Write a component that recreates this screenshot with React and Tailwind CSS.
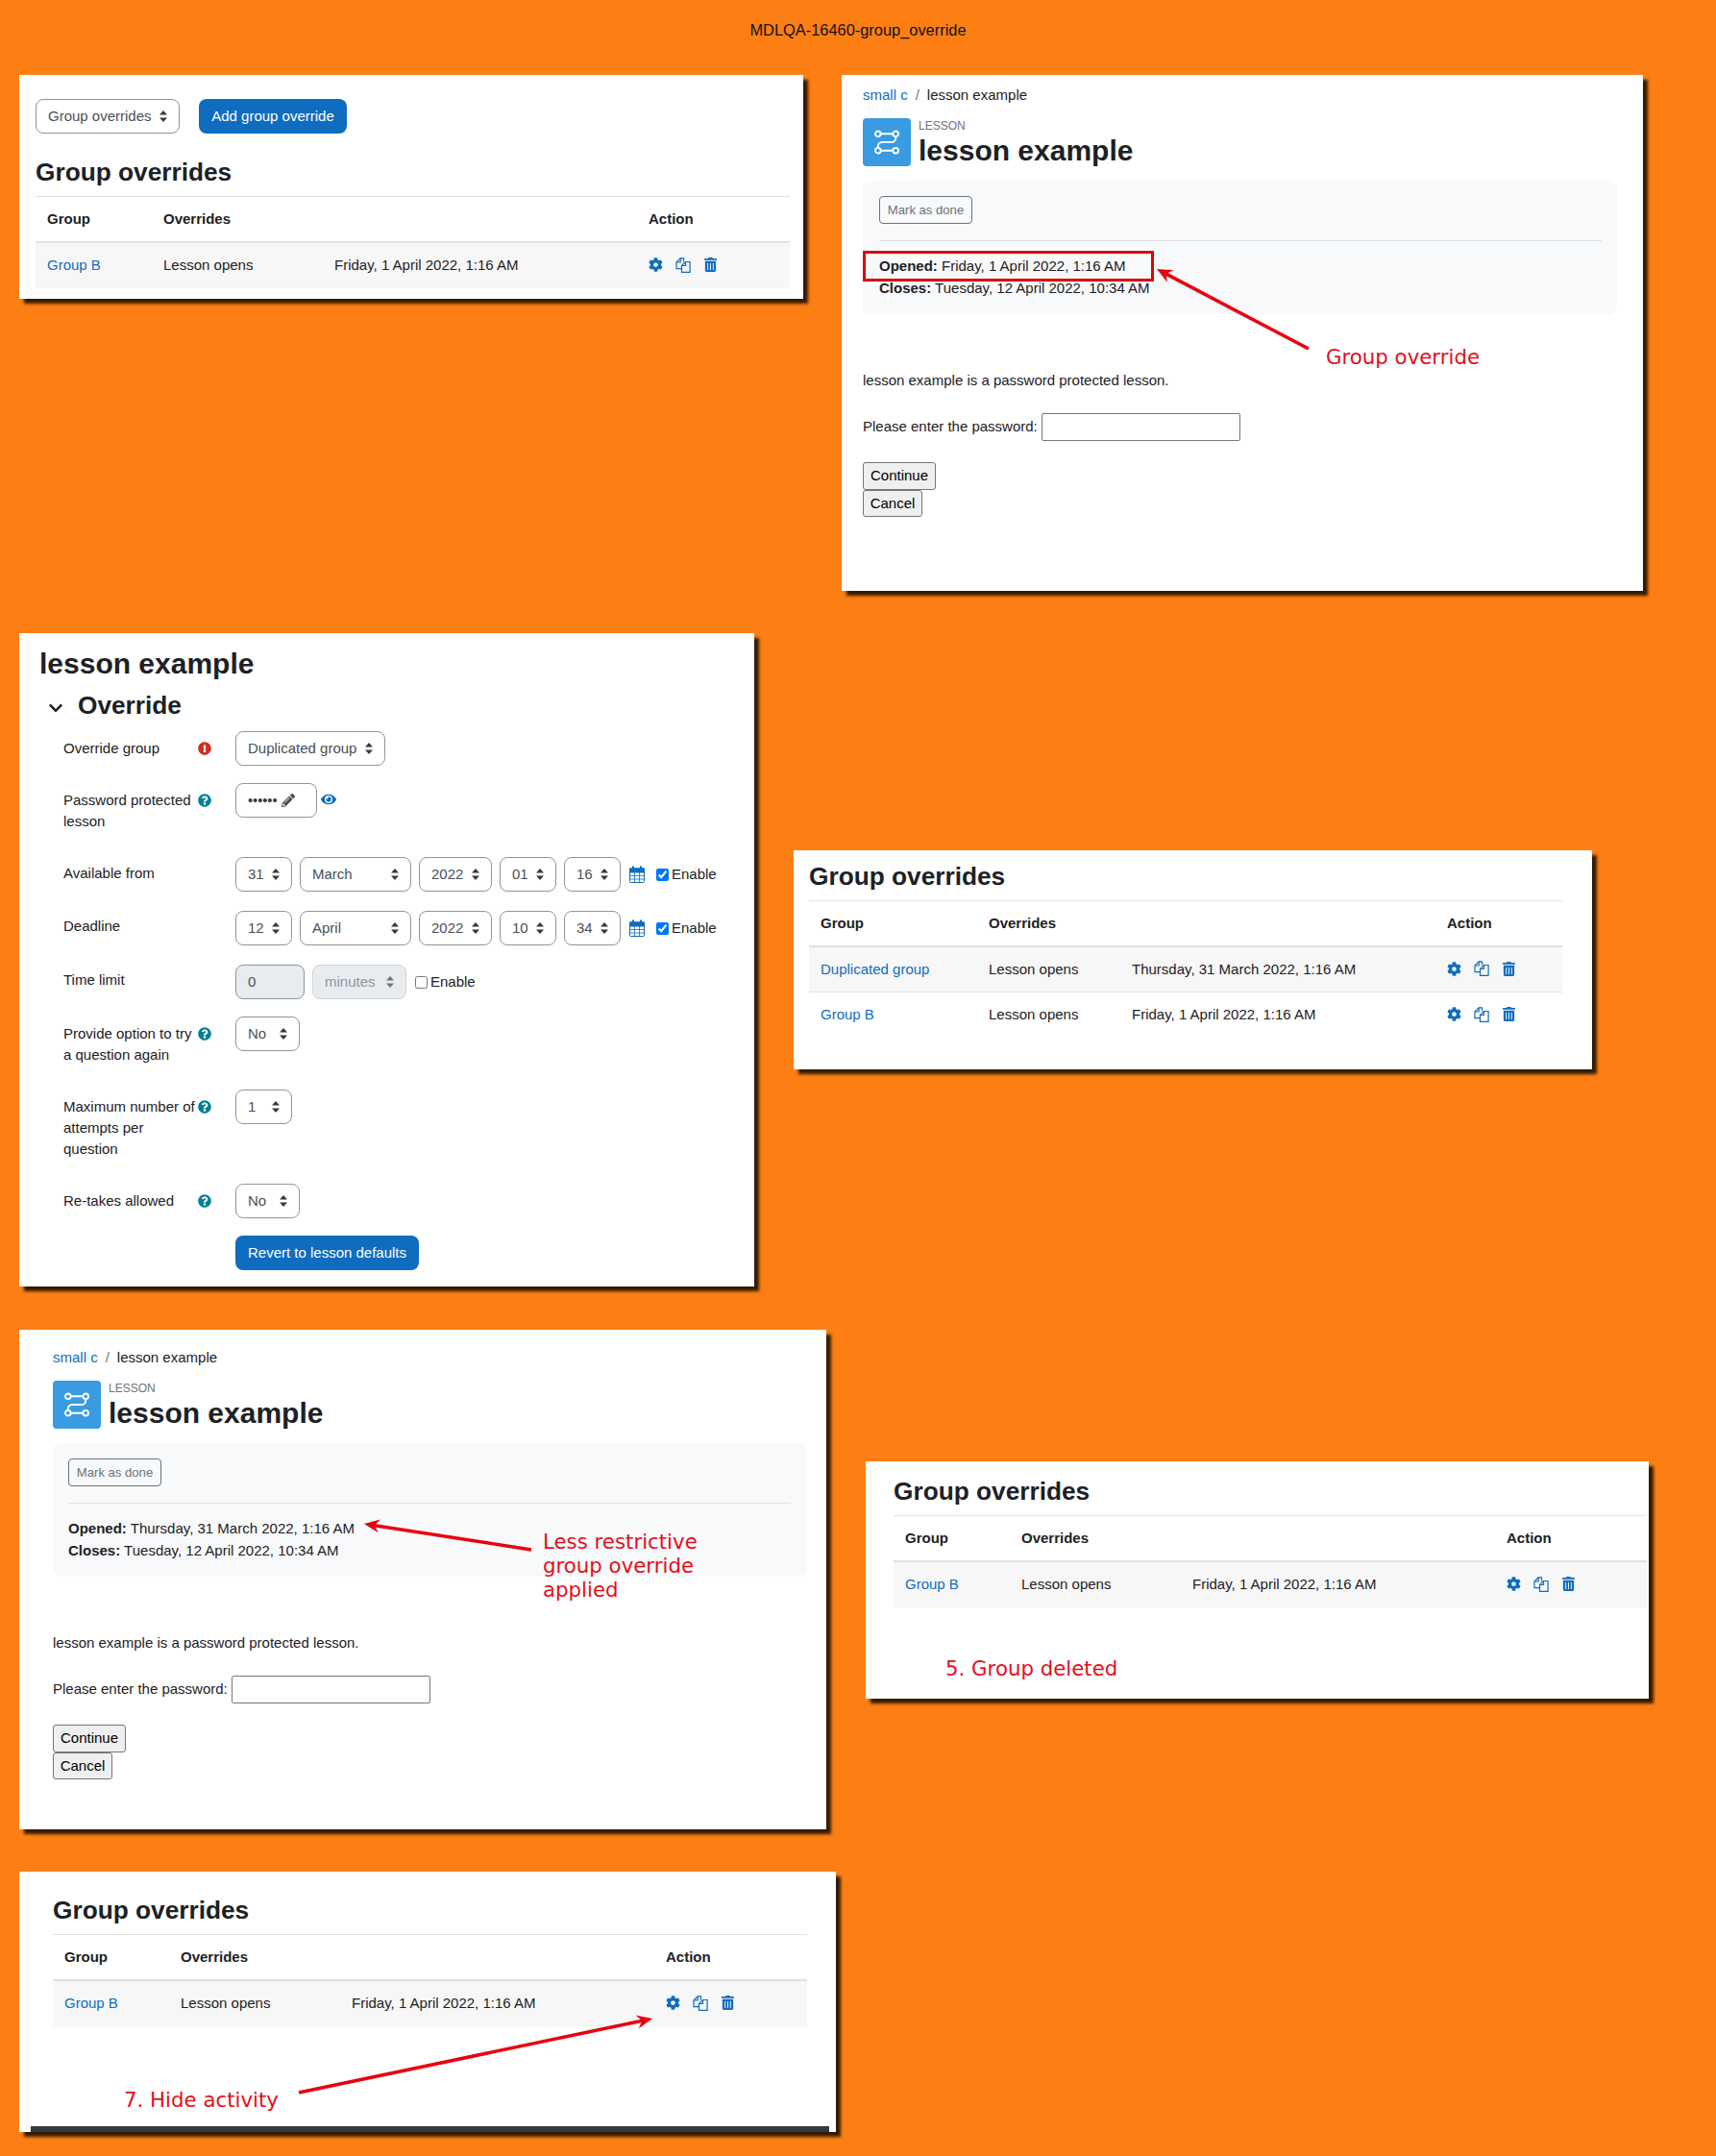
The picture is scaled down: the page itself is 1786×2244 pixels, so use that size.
import React from "react";
import { FaCog, FaTrashAlt, FaChevronDown, FaExclamationCircle, FaQuestionCircle, FaEye, FaPencilAlt } from "react-icons/fa";

const panel = "relative shrink-0 bg-white shadow-[5px_5px_3px_rgba(30,15,0,0.9)]";
const h2 = "h-[32px] text-[26.25px] leading-[32px] font-bold text-[#1d2125]";
const annot = "absolute font-['DejaVu_Sans',sans-serif] text-[21.3px] leading-[25px] text-[#e3101c] whitespace-nowrap";

function Arrow({ x1, y1, x2, y2 }) {
  const a = Math.atan2(y2 - y1, x2 - x1);
  const L = 16, W = 7;
  const bx = x2 - L * Math.cos(a), by = y2 - L * Math.sin(a);
  const nx = -Math.sin(a), ny = Math.cos(a);
  const ix = x2 - 11 * Math.cos(a), iy = y2 - 11 * Math.sin(a);
  const pts = `${x2},${y2} ${bx + nx * W},${by + ny * W} ${ix},${iy} ${bx - nx * W},${by - ny * W}`;
  return (
    <svg className="absolute inset-0 w-full h-full pointer-events-none">
      <line x1={x1} y1={y1} x2={ix} y2={iy} stroke="#e8000f" strokeWidth="3.5" />
      <polygon points={pts} fill="#e8000f" />
    </svg>
  );
}

function CopyIcon() {
  return (
    <svg width="16" height="16" viewBox="0 0 16 16" fill="none" stroke="#0f6cbf" strokeWidth="1.2">
      <path d="M8.5 4.5V.8H5.2L1 5v6.7h5.5" />
      <path d="M5.2.8V5H1" />
      <path d="M10.5 4.5h4.6v10.8H6.5V8.5z" />
      <path d="M10.5 4.5v4h-4" />
    </svg>
  );
}

function CalendarIcon() {
  return (
    <svg width="16" height="18" viewBox="0 0 16 18" fill="none" stroke="#0f6cbf" strokeWidth="1" className="ml-[9px] shrink-0">
      <rect x="0.5" y="3" width="15" height="14.5" rx="1" />
      <rect x="0.5" y="3" width="15" height="4" fill="#0f6cbf" />
      <path d="M4 .5v4.5M12 .5v4.5" strokeWidth="2" />
      <path d="M5.5 7v10.5M10.5 7v10.5M.5 10.5h15M.5 14h15" strokeWidth="0.8" />
    </svg>
  );
}

function Actions() {
  return (
    <div className="flex items-center text-[#0f6cbf] mb-[2px]">
      <span className="w-[28px] flex"><FaCog size={15} /></span>
      <span className="w-[28px] flex"><CopyIcon /></span>
      <span className="w-[28px] flex pl-[1px]"><FaTrashAlt size={15} /></span>
    </div>
  );
}

function OverridesTable({ width, cols, rows }) {
  return (
    <table className={`${width} table-fixed border-separate border-spacing-0 border-t border-[#dee2e6] text-[15px] text-[#1d2125]`}>
      <colgroup>
        {cols.map((c, i) => <col key={i} className={c} />)}
      </colgroup>
      <thead>
        <tr>
          <th className="h-[48px] pl-3 text-left font-bold border-b-2 border-[#dee2e6]">Group</th>
          <th className="pl-3 text-left font-bold border-b-2 border-[#dee2e6]">Overrides</th>
          <th className="border-b-2 border-[#dee2e6]"></th>
          <th className="pl-3 text-left font-bold border-b-2 border-[#dee2e6]">Action</th>
        </tr>
      </thead>
      <tbody>
        {rows.map((r, i) => (
          <tr key={r.g} className={i === 0 ? "bg-[#f7f7f7]" : ""}>
            <td className={`h-[47px] pl-3 text-[#0f6cbf] ${i === 0 && rows.length > 1 ? "border-b border-[#dee2e6]" : ""}`}>{r.g}</td>
            <td className={`pl-3 ${i === 0 && rows.length > 1 ? "border-b border-[#dee2e6]" : ""}`}>Lesson opens</td>
            <td className={`pl-3 whitespace-nowrap ${i === 0 && rows.length > 1 ? "border-b border-[#dee2e6]" : ""}`}>{r.d}</td>
            <td className={`pl-3 ${i === 0 && rows.length > 1 ? "border-b border-[#dee2e6]" : ""}`}><Actions /></td>
          </tr>
        ))}
      </tbody>
    </table>
  );
}

function LessonIcon() {
  return (
    <div className="w-[50px] h-[50px] rounded-[4px] bg-[#399be2] flex items-center justify-center shrink-0">
      <svg width="26" height="26" viewBox="0 0 24 24" fill="none" stroke="#fff" strokeWidth="1.8">
        <circle cx="3.5" cy="4" r="2.6" />
        <circle cx="20.5" cy="4" r="2.6" />
        <circle cx="3.5" cy="20" r="2.6" />
        <circle cx="20.5" cy="20" r="2.6" />
        <path d="M6 4h12M6 20h12M20.5 6.6v1.4a4 4 0 0 1-4 4h-9a4 4 0 0 0-4 4v1.4" />
      </svg>
    </div>
  );
}

function LessonView({ opened, closes, topPad, boxPad }) {
  return (
    <div className={topPad}>
      <div className="h-[20px] leading-[20px] text-[15px] text-[#1d2125]">
        <span className="text-[#0f6cbf]">small c</span>
        <span className="mx-[8px] text-[#6a737b]">/</span>
        <span>lesson example</span>
      </div>
      <div className="mt-[14px] flex gap-[8px]">
        <LessonIcon />
        <div>
          <div className="h-[16px] leading-[16px] text-[12px] text-[#6a737b]">LESSON</div>
          <div className="mt-[2px] h-[32px] leading-[32px] text-[30px] font-bold text-[#1d2125]">lesson example</div>
        </div>
      </div>
      <div className={`mt-[15px] w-[785px] h-[139px] rounded-[8px] bg-[#f8f9fa] pt-[16px] ${boxPad}`}>
        <button className="block w-[97px] h-[29px] rounded-[4px] border border-[#6a737b] bg-transparent text-[13.1px] text-[#6a737b]">Mark as done</button>
        <div className="mt-[17px] border-t border-[#dee2e6] w-[752px]"></div>
        <div className="mt-[14px] text-[15px] leading-[23px] text-[#1d2125]">
          <div><b>Opened:</b> {opened}</div>
          <div><b>Closes:</b> {closes}</div>
        </div>
      </div>
      <p className="mt-[58px] h-[22px] leading-[22px] text-[15px] text-[#1d2125]">lesson example is a password protected lesson.</p>
      <div className="mt-[23px] flex items-center h-[29px] text-[15px] text-[#1d2125]">
        <span>Please enter the password:</span>
        <input type="password" className="ml-[4px] w-[207px] h-[29px] border border-[#767676] rounded-[2px] bg-white" />
      </div>
      <div className="mt-[22px] flex flex-col items-start">
        <button className="h-[29px] w-[76px] border border-[#767676] rounded-[3px] bg-[#efefef] text-[15px] text-black">Continue</button>
        <button className="h-[28px] w-[62px] border border-[#767676] rounded-[3px] bg-[#efefef] text-[15px] text-black">Cancel</button>
      </div>
    </div>
  );
}

function UpDown({ color = "#343a40" }) {
  return (
    <svg width="8" height="12" viewBox="0 0 8 12" className="shrink-0">
      <path d="M4 0 L8 4.6 H0 Z M4 12 L0 7.4 H8 Z" fill={color} />
    </svg>
  );
}

function Sel({ w, children, disabled }) {
  return (
    <div className={`${w} h-[36px] shrink-0 flex items-center justify-between pl-[12px] pr-[12px] rounded-[8px] border text-[15px] ${disabled ? "bg-[#e9ecef] border-[#ced4da] text-[#8f959e]" : "bg-white border-[#8f959e] text-[#495057]"}`}>
      <span className="whitespace-nowrap">{children}</span>
      <UpDown color={disabled ? "#6a737b" : "#343a40"} />
    </div>
  );
}

function Help() {
  return <FaQuestionCircle size={14} className="text-[#008196] shrink-0" />;
}

function Row({ h, pt, label, icon, children }) {
  return (
    <div className={`${h} flex items-start`}>
      <div className={`w-[179px] shrink-0 flex text-[15px] leading-[22px] text-[#1d2125] ${pt}`}>
        <div className="w-[140px] shrink-0">{label}</div>
        <div className="h-[22px] flex items-center">{icon}</div>
      </div>
      {children}
    </div>
  );
}

function DateRow({ d, m, y, hh, mm }) {
  return (
    <div className="flex items-center">
      <Sel w="w-[59px]">{d}</Sel>
      <div className="ml-[8px]"><Sel w="w-[116px]">{m}</Sel></div>
      <div className="ml-[8px]"><Sel w="w-[76px]">{y}</Sel></div>
      <div className="ml-[8px]"><Sel w="w-[59px]">{hh}</Sel></div>
      <div className="ml-[8px]"><Sel w="w-[59px]">{mm}</Sel></div>
      <CalendarIcon />
      <input type="checkbox" defaultChecked className="ml-[12px] w-[13px] h-[13px] shrink-0" />
      <span className="ml-[3px] text-[15px] text-[#1d2125]">Enable</span>
    </div>
  );
}

export default function App() {
  return (
    <div className="w-[1786px] h-[2244px] overflow-hidden bg-[#fd7f14] font-['Liberation_Sans',Arial,sans-serif]">
      <div className="h-[78px] pt-[22px] text-center text-[16.4px] leading-[18px] text-[#111]">MDLQA-16460-group_override</div>

      <div className="flex items-start pl-[20px]">
        <div className={`${panel} w-[816px] h-[233px] pl-[17px] pt-[25px]`}>
          <div className="flex items-center">
            <Sel w="w-[150px]">Group overrides</Sel>
            <button className="ml-[20px] w-[154px] h-[36px] rounded-[8px] bg-[#0f6cbf] text-white text-[15px]">Add group override</button>
          </div>
          <h2 className={`${h2} mt-[24px] mb-[9px]`}>Group overrides</h2>
          <OverridesTable width="w-[785px]" cols={["w-[121px]", "w-[178px]", "w-[327px]", "w-[159px]"]} rows={[{ g: "Group B", d: "Friday, 1 April 2022, 1:16 AM" }]} />
        </div>

        <div className={`${panel} ml-[40px] w-[834px] h-[537px] pl-[22px]`}>
          <LessonView topPad="pt-[11px]" boxPad="px-[17px]" opened="Friday, 1 April 2022, 1:16 AM" closes="Tuesday, 12 April 2022, 10:34 AM" />
          <div className="absolute left-[22px] top-[183px] w-[303px] h-[32px] border-[3px] border-[#e0000f]"></div>
          <Arrow x1={486} y1={285} x2={328} y2={202} />
          <div className={`${annot} left-[504px] top-[281px]`}>Group override</div>
        </div>
      </div>

      <div className="flex items-start pl-[20px] mt-[44px]">
        <div className={`${panel} w-[765px] h-[680px] pt-[14px]`}>
          <div className="pl-[21px] h-[36px] leading-[36px] text-[30px] font-bold text-[#1d2125]">lesson example</div>
          <div className="mt-[11px] pl-[30px] h-[30px] flex items-center">
            <FaChevronDown size={16} className="text-[#1d2125] mr-[15px] mt-[3px]" />
            <span className="text-[26.25px] font-bold text-[#1d2125]">Override</span>
          </div>
          <div className="mt-[11px] pl-[46px]">
            <Row h="h-[54px]" pt="pt-[7px]" label="Override group" icon={<FaExclamationCircle size={14} className="text-[#ca3120]" />}>
              <Sel w="w-[156px]">Duplicated group</Sel>
            </Row>
            <Row h="h-[77px]" pt="pt-[7px]" label={<>Password protected<br />lesson</>} icon={<Help />}>
              <div className="w-[85px] h-[36px] rounded-[8px] border border-[#8f959e] flex items-center pl-[12px] text-[#343a40]">
                <span className="text-[14.5px] leading-none">••••••</span>
                <FaPencilAlt size={14} className="ml-[5px] text-[#495057]" />
              </div>
              <FaEye size={16} className="ml-[4px] mt-[9px] text-[#0f6cbf]" />
            </Row>
            <Row h="h-[56px]" pt="pt-[6px]" label="Available from">
              <DateRow d="31" m="March" y="2022" hh="01" mm="16" />
            </Row>
            <Row h="h-[56px]" pt="pt-[5px]" label="Deadline">
              <DateRow d="12" m="April" y="2022" hh="10" mm="34" />
            </Row>
            <Row h="h-[54px]" pt="pt-[5px]" label="Time limit">
              <div className="flex items-center">
                <div className="w-[72px] h-[36px] rounded-[8px] border border-[#8f959e] bg-[#e9ecef] flex items-center pl-[12px] text-[15px] text-[#495057]">0</div>
                <div className="ml-[8px]"><Sel w="w-[98px]" disabled>minutes</Sel></div>
                <input type="checkbox" className="ml-[9px] w-[13px] h-[13px]" />
                <span className="ml-[3px] text-[15px] text-[#1d2125]">Enable</span>
              </div>
            </Row>
            <Row h="h-[76px]" pt="pt-[7px]" label={<>Provide option to try<br />a question again</>} icon={<Help />}>
              <Sel w="w-[67px]">No</Sel>
            </Row>
            <Row h="h-[98px]" pt="pt-[7px]" label={<>Maximum number of<br />attempts per<br />question</>} icon={<Help />}>
              <Sel w="w-[59px]">1</Sel>
            </Row>
            <Row h="h-[54px]" pt="pt-[7px]" label="Re-takes allowed" icon={<Help />}>
              <Sel w="w-[67px]">No</Sel>
            </Row>
            <div className="pl-[179px]">
              <button className="w-[191px] h-[36px] rounded-[8px] bg-[#0f6cbf] text-white text-[15px]">Revert to lesson defaults</button>
            </div>
          </div>
        </div>

        <div className={`${panel} ml-[41px] mt-[226px] w-[831px] h-[228px] pl-[16px] pt-[11px]`}>
          <h2 className={`${h2} mb-[9px]`}>Group overrides</h2>
          <OverridesTable width="w-[784px]" cols={["w-[175px]", "w-[149px]", "w-[328px]", "w-[132px]"]} rows={[{ g: "Duplicated group", d: "Thursday, 31 March 2022, 1:16 AM" }, { g: "Group B", d: "Friday, 1 April 2022, 1:16 AM" }]} />
        </div>
      </div>

      <div className="flex items-start pl-[20px] mt-[45px]">
        <div className={`${panel} w-[840px] h-[520px] pl-[35px]`}>
          <LessonView topPad="pt-[19px]" boxPad="px-[16px]" opened="Thursday, 31 March 2022, 1:16 AM" closes="Tuesday, 12 April 2022, 10:34 AM" />
          <Arrow x1={533} y1={229} x2={359} y2={202} />
          <div className={`${annot} left-[545px] top-[208px]`}>Less restrictive<br />group override<br />applied</div>
        </div>

        <div className={`${panel} ml-[41px] mt-[137px] w-[815px] h-[247px] pl-[29px] pt-[15px]`}>
          <h2 className={`${h2} mb-[9px]`}>Group overrides</h2>
          <OverridesTable width="w-[784px]" cols={["w-[121px]", "w-[178px]", "w-[327px]", "w-[158px]"]} rows={[{ g: "Group B", d: "Friday, 1 April 2022, 1:16 AM" }]} />
          <div className={`${annot} left-[83px] top-[203px]`}>5. Group deleted</div>
        </div>
      </div>

      <div className="flex items-start pl-[20px] mt-[44px]">
        <div className={`${panel} w-[850px] h-[271px] pl-[35px] pt-[24px]`}>
          <h2 className={`${h2} mb-[9px]`}>Group overrides</h2>
          <OverridesTable width="w-[785px]" cols={["w-[121px]", "w-[178px]", "w-[327px]", "w-[159px]"]} rows={[{ g: "Group B", d: "Friday, 1 April 2022, 1:16 AM" }]} />
          <Arrow x1={291} y1={230} x2={659} y2={153} />
          <div className={`${annot} left-[109px] top-[225px]`}>7. Hide activity</div>
          <div className="absolute left-[12px] bottom-0 w-[831px] h-[6px] bg-[#333a42]"></div>
        </div>
      </div>
    </div>
  );
}
